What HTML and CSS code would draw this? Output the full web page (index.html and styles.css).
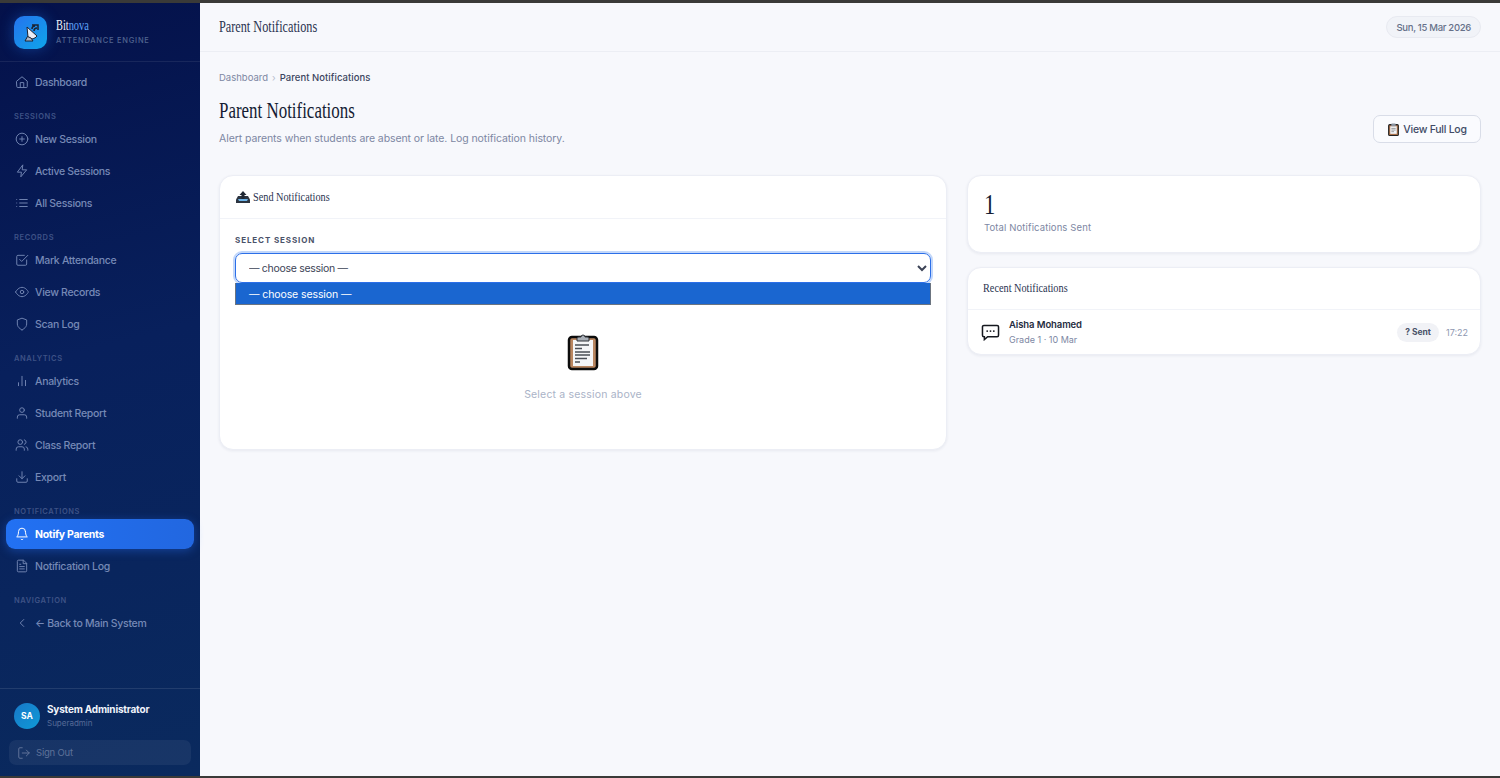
FILE: index.html
```html
<!DOCTYPE html>
<html lang="en">
<head>
<meta charset="utf-8">
<title>Parent Notifications</title>
<link rel="stylesheet" href="styles.css">
</head>
<body>
<div class="app">
  <aside class="sidebar">
    <div class="brand">
      <div class="logo">
        <svg viewBox="0 0 24 24" width="24" height="24"><path d="M8 6l10 9c-2 3-7 4-9 1z" fill="#e8edf5" stroke="#1c2230" stroke-width="1"/><path d="M8.5 15.5L6 20h8l-2-3z" fill="#aeb8c8" stroke="#1c2230" stroke-width="1"/><path d="M13 8a3 3 0 0 1 3-3M15 10a3 3 0 0 1 3-3M13 4h6v5" fill="none" stroke="#1c2230" stroke-width="1.5"/></svg>
      </div>
      <div>
        <div class="brand-name"><span class="serif-brand">Bit<span class="brand-accent">nova</span></span></div>
        <div class="brand-sub">ATTENDANCE ENGINE</div>
      </div>
    </div>
    <nav class="nav">
      <a class="item"><svg class="ico" viewBox="0 0 24 24"><path d="M3 10.5 12 3l9 7.5V20a1.500 1.500 0 0 1-1.500 1.500h-15A1.500 1.500 0 0 1 3 20z"/><path d="M9 21.500V13h6v8.500"/></svg>Dashboard</a>
      <div class="label">SESSIONS</div>
      <a class="item"><svg class="ico" viewBox="0 0 24 24"><circle cx="12" cy="12" r="10"/><path d="M12 8v8M8 12h8"/></svg>New Session</a>
      <a class="item"><svg class="ico" viewBox="0 0 24 24"><path d="M13 2 4 14h7l-1 8 10-12h-7z"/></svg>Active Sessions</a>
      <a class="item"><svg class="ico" viewBox="0 0 24 24"><path d="M8 6h13M8 12h13M8 18h13M3 6h.01M3 12h.01M3 18h.01"/></svg>All Sessions</a>
      <div class="label">RECORDS</div>
      <a class="item"><svg class="ico" viewBox="0 0 24 24"><path d="M20 12v7a2 2 0 0 1-2 2H5a2 2 0 0 1-2-2V6a2 2 0 0 1 2-2h11"/><path d="m8 11 3.500 3.500L22 4"/></svg>Mark Attendance</a>
      <a class="item"><svg class="ico" viewBox="0 0 24 24"><path d="M1 12s4-8 11-8 11 8 11 8-4 8-11 8-11-8-11-8z"/><circle cx="12" cy="12" r="3"/></svg>View Records</a>
      <a class="item"><svg class="ico" viewBox="0 0 24 24"><path d="M12 22s8-3 8-10V5l-8-3-8 3v7c0 7 8 10 8 10z"/></svg>Scan Log</a>
      <div class="label">ANALYTICS</div>
      <a class="item"><svg class="ico" viewBox="0 0 24 24"><path d="M18 20v-9M12 20V4M6 20v-5"/></svg>Analytics</a>
      <a class="item"><svg class="ico" viewBox="0 0 24 24"><path d="M20 21v-2a4 4 0 0 0-4-4H8a4 4 0 0 0-4 4v2"/><circle cx="12" cy="7" r="4"/></svg>Student Report</a>
      <a class="item"><svg class="ico" viewBox="0 0 24 24"><path d="M16 21v-2a4 4 0 0 0-4-4H6a4 4 0 0 0-4 4v2"/><circle cx="9" cy="7" r="4"/><path d="M22 21v-2a4 4 0 0 0-3-3.870M16 3.130a4 4 0 0 1 0 7.750"/></svg>Class Report</a>
      <a class="item"><svg class="ico" viewBox="0 0 24 24"><path d="M21 15v4a2 2 0 0 1-2 2H5a2 2 0 0 1-2-2v-4"/><path d="m7 10 5 5 5-5M12 15V3"/></svg>Export</a>
      <div class="label">NOTIFICATIONS</div>
      <a class="item active"><svg class="ico" viewBox="0 0 24 24"><path d="M18 8A6 6 0 0 0 6 8c0 7-3 9-3 9h18s-3-2-3-9"/><path d="M13.700 21a2 2 0 0 1-3.400 0"/></svg>Notify Parents</a>
      <a class="item"><svg class="ico" viewBox="0 0 24 24"><path d="M14 2H6a2 2 0 0 0-2 2v16a2 2 0 0 0 2 2h12a2 2 0 0 0 2-2V8z"/><path d="M14 2v6h6M16 13H8M16 17H8M10 9H8"/></svg>Notification Log</a>
      <div class="label">NAVIGATION</div>
      <a class="item"><svg class="ico" viewBox="0 0 24 24"><path d="m15 18-6-6 6-6"/></svg>← Back to Main System</a>
    </nav>
    <div class="foot">
      <div class="user">
        <div class="avatar">SA</div>
        <div>
          <div class="user-name">System Administrator</div>
          <div class="user-role">Superadmin</div>
        </div>
      </div>
      <a class="signout"><svg class="ico" viewBox="0 0 24 24"><path d="M9 21H5a2 2 0 0 1-2-2V5a2 2 0 0 1 2-2h4M16 17l5-5-5-5M21 12H9"/></svg>Sign Out</a>
    </div>
  </aside>
  <main class="main">
    <header class="topbar">
      <div class="topbar-title"><span class="serif-top">Parent Notifications</span></div>
      <div class="date">Sun, 15 Mar 2026</div>
    </header>
    <div class="content">
      <div class="crumbs"><span>Dashboard</span><span class="sep">›</span><span class="cur">Parent Notifications</span></div>
      <div class="page-head">
        <div>
          <h1 class="title"><span class="serif-h1">Parent Notifications</span></h1>
          <p class="sub">Alert parents when students are absent or late. Log notification history.</p>
        </div>
        <button class="btn">
          <svg viewBox="0 0 24 24" width="13" height="15"><rect x="3" y="3" width="18" height="20" rx="2" fill="#a9714b" stroke="#222" stroke-width="2"/><rect x="6" y="6" width="12" height="14" fill="#f2f4f7"/><rect x="8" y="1" width="8" height="5" rx="1" fill="#8a939f"/><path d="M8 10h8M8 13h8M8 16h5" stroke="#555" stroke-width="1"/></svg>
          View Full Log
        </button>
      </div>
      <div class="grid">
        <section class="card send">
          <div class="card-head">
            <svg viewBox="0 0 16 14" width="16" height="14"><path d="M1 9.500 3 6h10l2 3.500V13H1z" fill="#2c3440"/><path d="M3 9h10l-1 2H4z" fill="#6db3e8"/><path d="M8 1 4.500 5H6.500v4h3V5h2z" fill="#1f2733"/></svg>
            <span class="serif-card">Send Notifications</span>
          </div>
          <div class="card-body">
            <label class="field-label">SELECT SESSION</label>
            <div class="select-wrap">
              <select class="select"><option>— choose session —</option></select>
              <div class="dropdown">— choose session —</div>
            </div>
            <div class="empty">
              <svg viewBox="0 0 32 38" width="32" height="38"><rect x="2" y="4" width="28" height="32" rx="3" fill="#b98660" stroke="#0c0c0c" stroke-width="2.500"/><rect x="6" y="7" width="20" height="26" fill="#f4f5f7"/><path d="M10 5a2 2 0 0 1 2-1h2a2 2 0 0 1 4 0h2a2 2 0 0 1 2 1v3H10z" fill="#a8aeb6" stroke="#30343a" stroke-width="1"/><path d="M8 12h14M8 15.500h7M8 19h15M8 22h15M8 25.500h12M8 29h5" stroke="#4a4f57" stroke-width="1.300"/></svg>
              <div class="empty-text">Select a session above</div>
            </div>
          </div>
        </section>
        <div class="side">
          <section class="card stat">
            <div class="stat-num"><span class="serif-num">1</span></div>
            <div class="stat-label">Total Notifications Sent</div>
          </section>
          <section class="card">
            <div class="recent-head"><span class="serif-card">Recent Notifications</span></div>
            <div class="row">
              <svg class="row-ico" viewBox="0 0 20 18"><path d="M3 1.500h14a1.500 1.500 0 0 1 1.500 1.500v9a1.500 1.500 0 0 1-1.500 1.500H7L3.500 16.500V13.500H3A1.500 1.500 0 0 1 1.500 12V3A1.500 1.500 0 0 1 3 1.500z" fill="#fff" stroke="#15181f" stroke-width="1.600"/><circle cx="6.500" cy="7.500" r="1" fill="#15181f"/><circle cx="10" cy="7.500" r="1" fill="#15181f"/><circle cx="13.500" cy="7.500" r="1" fill="#15181f"/></svg>
              <div class="row-main">
                <div class="row-name">Aisha Mohamed</div>
                <div class="row-meta">Grade 1 · 10 Mar</div>
              </div>
              <span class="badge">? Sent</span>
              <span class="time">17:22</span>
            </div>
          </section>
        </div>
      </div>
    </div>
  </main>
</div>
</body>
</html>
```
FILE: styles.css
```css
* { box-sizing: border-box; }
html, body { margin: 0; height: 100%; overflow: hidden; }
body {
  background: #3a3a38;
  padding: 3px 0 2px;
  font-family: "Inter", "Liberation Sans", sans-serif;
  color: #1b2438;
}
.app { display: flex; height: 773px; background: #f7f8fc; }

.serif-brand, .serif-top, .serif-h1, .serif-card, .serif-num {
  display: inline-block;
  font-family: "Liberation Serif", serif;
  transform-origin: left center;
  white-space: nowrap;
}
.serif-brand { font-size: 14px; transform: scaleX(.74); }
.serif-top { font-size: 17px; transform: scaleX(.72); }
.serif-h1 { font-size: 24px; transform: scaleX(.705); }
.serif-card { font-size: 13.500px; transform: scaleX(.76); }
.serif-num { font-size: 30px; transform: scaleX(.75); }

.sidebar {
  width: 200px;
  flex: none;
  display: flex;
  flex-direction: column;
  background: linear-gradient(165deg, #04114a 0%, #08205c 45%, #0a2a5e 100%);
}
.brand {
  display: flex;
  align-items: center;
  gap: 9px;
  height: 59px;
  padding: 1px 14px 0;
  border-bottom: 1px solid rgba(255,255,255,.08);
}
.logo {
  width: 33px;
  height: 33px;
  border-radius: 10px;
  background: linear-gradient(135deg, #2573ee, #0ea5e9);
  box-shadow: 0 0 14px rgba(30,120,240,.4);
  display: flex;
  align-items: center;
  justify-content: center;
}
.brand-name { display: flex; line-height: 14px; color: #eef2fb; }
.brand-accent { color: #60a5fa; }
.brand-sub { font-size: 7.500px; line-height: 10px; font-weight: 500; letter-spacing: .75px; color: #51648f; margin-top: 3px; white-space: nowrap; }

.nav { flex: 1; padding: 5px 6px 0; display: flex; flex-direction: column; gap: 2px; }
.item {
  display: flex;
  align-items: center;
  gap: 6px;
  height: 30px;
  padding: 0 9px;
  border-radius: 9px;
  font-size: 10.500px;
  font-weight: 500;
  letter-spacing: -.3px;
  color: #7689b6;
  white-space: nowrap;
}
.ico {
  width: 14px;
  height: 14px;
  flex: none;
  fill: none;
  stroke: currentColor;
  stroke-width: 1.700;
  stroke-linecap: round;
  stroke-linejoin: round;
}
.item .ico { color: #6f83b0; }
.item.active {
  background: linear-gradient(90deg, #2271f3, #2267e0);
  color: #fff;
  font-weight: 700;
  box-shadow: 0 2px 10px rgba(37,110,240,.4);
}
.item.active .ico { color: #fff; }
.label {
  font-size: 7.500px;
  line-height: 10px;
  font-weight: 600;
  letter-spacing: .6px;
  color: #3e5286;
  padding: 13px 8px 0;
}

.foot { border-top: 1px solid rgba(255,255,255,.1); padding: 14px 9px 11px; }
.user { display: flex; align-items: center; gap: 7px; padding: 0 5px; margin-bottom: 11px; }
.avatar {
  width: 26px;
  height: 26px;
  border-radius: 50%;
  background: linear-gradient(135deg, #1878c8, #0f9ad6);
  color: #fff;
  font-size: 8.500px;
  font-weight: 700;
  display: flex;
  align-items: center;
  justify-content: center;
  flex: none;
}
.user-name { font-size: 10px; line-height: 13px; font-weight: 700; letter-spacing: -.2px; color: #f1f4fb; white-space: nowrap; }
.user-role { font-size: 8px; line-height: 11px; color: #566a97; margin-top: 2px; }
.signout {
  display: flex;
  align-items: center;
  gap: 5px;
  height: 25px;
  padding: 0 8px;
  border-radius: 7px;
  background: rgba(255,255,255,.06);
  font-size: 9.500px;
  letter-spacing: -.2px;
  color: #5f7299;
}

.main { flex: 1; min-width: 0; }
.topbar {
  height: 49px;
  border-bottom: 1px solid #eceef4;
  display: flex;
  align-items: center;
  justify-content: space-between;
  padding: 0 19px;
}
.topbar-title { display: flex; color: #2a3350; }
.date {
  height: 22px;
  padding: 0 9px;
  border: 1px solid #e8eaf1;
  border-radius: 11px;
  background: #f1f3f8;
  display: flex;
  align-items: center;
  font-size: 9.500px;
  font-weight: 500;
  letter-spacing: -.3px;
  color: #667089;
}
.content { padding: 19px 19px 0; }
.crumbs { display: flex; align-items: center; gap: 4px; font-size: 9.500px; line-height: 13px; color: #7d87a3; }
.sep { color: #b6bccd; }
.cur { color: #3b4560; font-weight: 500; letter-spacing: .05px; }
.page-head { display: flex; align-items: flex-end; justify-content: space-between; margin-top: 13px; }
.title { display: flex; margin: 0; font-weight: 400; line-height: 26px; color: #141c33; }
.sub { margin: 9px 0 0; font-size: 10.500px; line-height: 14px; letter-spacing: -.08px; color: #7d87a3; }
.btn {
  width: 108px;
  height: 28px;
  margin-bottom: 3px;
  border: 1px solid #d9dde8;
  border-radius: 7px;
  background: #fafbfe;
  display: flex;
  align-items: center;
  justify-content: center;
  gap: 3px;
  font: 500 10.500px "Inter", sans-serif;
  letter-spacing: -.25px;
  color: #414b66;
}
.grid { display: grid; grid-template-columns: 728px 1fr; gap: 20px; margin-top: 29px; align-items: start; }
.card {
  background: #fff;
  border: 1px solid #eceef5;
  border-radius: 14px;
  box-shadow: 0 1px 3px rgba(30,40,80,.07);
}
.card-head {
  height: 43px;
  display: flex;
  align-items: center;
  gap: 2px;
  padding: 0 15px 1px;
  border-bottom: 1px solid #f1f3f8;
  color: #2a3350;
}
.send { height: 275px; }
.card-body { padding: 15px 15px 0; }
.field-label { display: block; font-size: 8px; line-height: 12px; font-weight: 700; letter-spacing: .9px; color: #4a5269; margin-bottom: 7px; }
.select-wrap { position: relative; }
.select {
  display: block;
  width: 100%;
  height: 30px;
  padding: 0 5px 0 9px;
  border: 1.500px solid #2c6fe8;
  border-radius: 7px;
  outline: 2px solid rgba(80,140,240,.35);
  background: #fff;
  font: 10.500px "Inter", sans-serif;
  letter-spacing: -.3px;
  color: #3c4356;
}
.dropdown {
  position: absolute;
  left: 0;
  right: 0;
  top: 30px;
  height: 22px;
  background: #1a66d0;
  border: 1px solid #6b7480;
  border-top: 0;
  color: #fff;
  font-size: 10.500px;
  letter-spacing: -.1px;
  line-height: 23px;
  padding-left: 13px;
}
.empty { display: flex; flex-direction: column; align-items: center; margin-top: 50px; }
.empty-text { margin-top: 17px; font-size: 10.500px; line-height: 14px; letter-spacing: .18px; color: #aab3c7; }
.side { display: flex; flex-direction: column; gap: 14px; }
.stat { height: 78px; padding: 13px 16px 0; }
.stat-num { display: flex; line-height: 29px; color: #141c33; }
.stat-label { margin-top: 3px; font-size: 9.500px; line-height: 13px; letter-spacing: .12px; color: #7d87a3; }
.recent-head {
  height: 42px;
  display: flex;
  align-items: center;
  padding: 0 15px 1px;
  border-bottom: 1px solid #f1f3f8;
  color: #2a3350;
}
.row { height: 44px; display: flex; align-items: center; padding: 0 12px 0 13px; }
.row-ico { width: 19px; height: 17px; flex: none; margin-right: 9px; }
.row-main { flex: 1; }
.row-name { font-size: 9.500px; line-height: 13px; font-weight: 600; letter-spacing: -.1px; color: #252c40; }
.row-meta { font-size: 9px; line-height: 12px; color: #7d87a3; margin-top: 3px; }
.badge {
  height: 19px;
  padding: 0 8px;
  border-radius: 10px;
  background: #f1f2f6;
  display: flex;
  align-items: center;
  font-size: 8.500px;
  font-weight: 700;
  color: #4a5269;
}
.time { margin-left: 7px; font-size: 9px; color: #8d97b0; }
```
